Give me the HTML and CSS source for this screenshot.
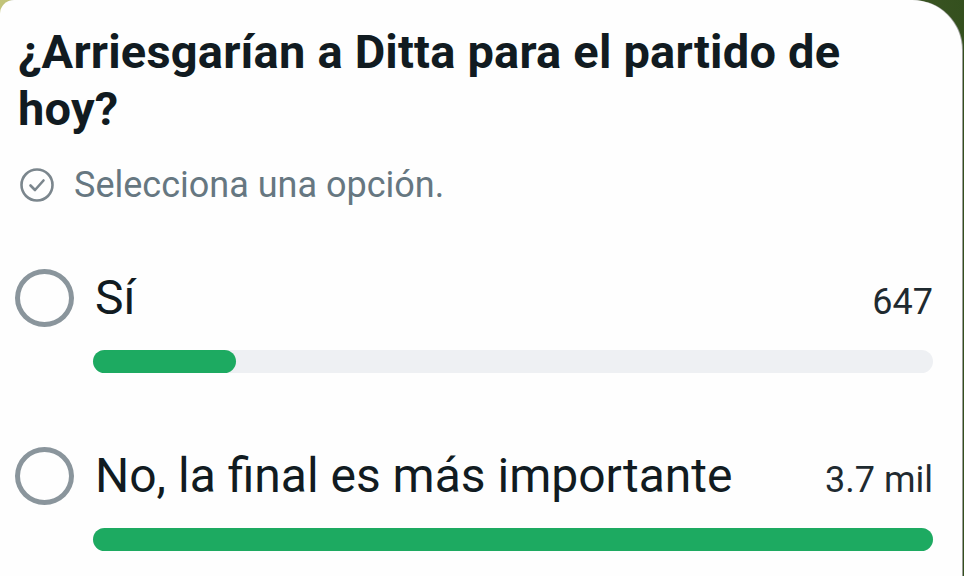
FILE: index.html
```html
<!DOCTYPE html>
<html lang="es">
<head>
<meta charset="utf-8">
<title>Encuesta</title>
<link rel="stylesheet" href="styles.css">
</head>
<body>
<div class="card">
  <h1 class="question">¿Arriesgarían a Ditta para el partido de hoy?</h1>
  <div class="hint">
    <svg class="hint-icon" viewBox="0 0 36 36" width="36" height="36" aria-hidden="true">
      <circle cx="18" cy="18" r="15.5" fill="none" stroke="#7b868d" stroke-width="2.6"/>
      <path d="M11.5 18.5 L16 23 L24.5 13.5" fill="none" stroke="#7b868d" stroke-width="2.6" stroke-linecap="round" stroke-linejoin="round"/>
    </svg>
    <span class="hint-text">Selecciona una opción.</span>
  </div>
  <div class="options">
    <div class="option">
      <span class="radio"></span>
      <div class="head">
        <span class="label">Sí</span>
        <span class="count">647</span>
      </div>
      <div class="track"><div class="fill" style="width:17%"></div></div>
    </div>
    <div class="option">
      <span class="radio"></span>
      <div class="head">
        <span class="label">No, la final es más importante</span>
        <span class="count">3.7 mil</span>
      </div>
      <div class="track"><div class="fill" style="width:100%"></div></div>
    </div>
  </div>
</div>
</body>
</html>
```
FILE: styles.css
```css
html, body {
  margin: 0;
  padding: 0;
}
body {
  width: 964px;
  height: 576px;
  overflow: hidden;
  background: linear-gradient(90deg, #c2c47a 0%, #6e7a4a 50%, #34501e 100%);
  font-family: Roboto, "Noto Sans", sans-serif;
}
.card {
  box-sizing: border-box;
  width: 962px;
  height: 576px;
  background: #fefefe;
  border-radius: 14px 50px 0 0;
  padding: 23px 29px 0 18px;
  box-shadow: 1px 0 0 #9a9c98;
}
.question {
  margin: 0;
  max-width: 860px;
  font-size: 47px;
  line-height: 57px;
  font-weight: 700;
  color: #111b21;
  letter-spacing: 0.2px;
}
.hint {
  display: flex;
  align-items: center;
  margin-top: 26px;
  height: 44px;
}
.hint-icon {
  margin-left: 1px;
  margin-right: 19px;
  flex: none;
}
.hint-text {
  font-size: 36px;
  line-height: 44px;
  color: #667781;
}
.options {
  margin-top: 62px;
  margin-left: -3px;
}
.option {
  display: grid;
  grid-template-columns: 59px 1fr;
  column-gap: 19px;
  margin-bottom: 74px;
}
.radio {
  box-sizing: border-box;
  width: 59px;
  height: 58px;
  border: 5.5px solid #8a959c;
  border-radius: 50%;
}
.head {
  display: flex;
  justify-content: space-between;
  align-items: baseline;
  height: 58px;
}
.label {
  font-size: 48px;
  line-height: 58px;
  color: #111b21;
  padding-left: 2px;
}
.count {
  font-size: 36px;
  color: #1f2a30;
}
.track {
  grid-column: 2;
  margin-top: 23px;
  height: 23px;
  border-radius: 12px;
  background: #eef0f3;
}
.fill {
  height: 100%;
  border-radius: 12px;
  background: #1daa61;
}
```
